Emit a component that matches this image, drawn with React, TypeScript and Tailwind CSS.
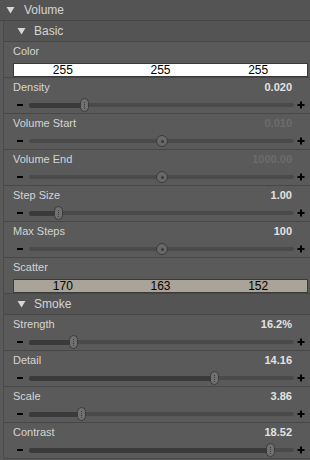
import React from 'react';

type SliderRow = {
  label: string;
  value: string;
  knob: number; // knob centre, px from window left
  shape: 'oval' | 'circle';
  disabled?: boolean;
};

const basicRows: SliderRow[] = [
  { label: 'Density', value: '0.020', knob: 84, shape: 'oval' },
  { label: 'Volume Start', value: '0.010', knob: 162, shape: 'circle', disabled: true },
  { label: 'Volume End', value: '1000.00', knob: 162, shape: 'circle', disabled: true },
  { label: 'Step Size', value: '1.00', knob: 58, shape: 'oval' },
  { label: 'Max Steps', value: '100', knob: 162, shape: 'circle' },
];

const smokeRows: SliderRow[] = [
  { label: 'Strength', value: '16.2%', knob: 73, shape: 'oval' },
  { label: 'Detail', value: '14.16', knob: 214, shape: 'oval' },
  { label: 'Scale', value: '3.86', knob: 81, shape: 'oval' },
  { label: 'Contrast', value: '18.52', knob: 270, shape: 'oval' },
];

const TRACK_LEFT = 29;

const Triangle = () => (
  <svg width="9" height="8" viewBox="0 0 9 8" className="shrink-0">
    <path d="M0.5 1 L8.5 1 L4.5 7.5 Z" fill="#d6d6d6" />
  </svg>
);

const Plus = () => (
  <svg width="8" height="8" viewBox="0 0 8 8" className="shrink-0 ml-[3px] mr-[5px]">
    <path d="M4 0.5 V7.5 M0.5 4 H7.5" stroke="#000" strokeWidth="2" />
  </svg>
);

const Header = ({ title, indent }: { title: string; indent: boolean }) => (
  <div
    className={`h-[21px] flex items-center border-b border-[#474747] bg-[#545454] text-[12px] text-[#d4d4d4] ${
      indent ? 'pl-[13px] gap-[8px]' : 'pl-[6px] gap-[9px]'
    }`}
  >
    <Triangle />
    <span>{title}</span>
  </div>
);

const Slider = ({ row }: { row: SliderRow }) => {
  const fill = row.shape === 'oval' ? row.knob - TRACK_LEFT : 0;
  return (
    <div className="relative h-[16px] mt-[2px] flex items-center">
      <div className="w-[6px] h-[2px] bg-black ml-[13px] mr-[6px]" />
      <div className="relative flex-1 h-[4px] rounded-full bg-[#4a4a4a]">
        {fill > 0 && (
          <div
            className="absolute left-0 top-[-0.5px] h-[5px] rounded-full bg-[#3a3a3a]"
            style={{ width: fill }}
          />
        )}
        {row.shape === 'oval' ? (
          <div
            className="absolute top-[-5px] w-[9px] h-[14px] rounded-full border border-[#3a3a3a] bg-[#707070] flex justify-center items-center"
            style={{ left: row.knob - TRACK_LEFT - 4.5 }}
          >
            <div className="w-[1px] h-[7px] border-l border-dotted border-[#3e3e3e]" />
          </div>
        ) : (
          <div
            className="absolute top-[-4px] w-[12px] h-[12px] rounded-full border-[1.5px] border-[#3a3a3a] bg-[#686868] flex justify-center items-center"
            style={{ left: row.knob - TRACK_LEFT - 6 }}
          >
            <div className="w-[3px] h-[3px] rounded-full bg-[#3a3a3a]" />
          </div>
        )}
      </div>
      <Plus />
    </div>
  );
};

const SliderProp = ({ row }: { row: SliderRow }) => (
  <div className="h-[36px] border-b border-[#474747] flex flex-col pt-[2px]">
    <div className="h-[15px] flex items-center justify-between pl-[9px] pr-[18px] text-[11px]">
      <span className="text-[#d4d4d4]">{row.label}</span>
      <span className={`font-bold text-[11px] ${row.disabled ? 'text-[#6c6c6c]' : 'text-[#e2e2e2]'}`}>
        {row.value}
      </span>
    </div>
    <Slider row={row} />
  </div>
);

const ColorProp = ({ label, rgb, bg }: { label: string; rgb: number[]; bg: string }) => (
  <div className="h-[36px] border-b border-[#474747] flex flex-col pt-[2px]">
    <div className="h-[15px] flex items-center pl-[9px] text-[11px] text-[#d4d4d4]">{label}</div>
    <div
      className={`ml-[9px] mr-[2px] mt-[4px] h-[15px] border border-[#3a3a3a] grid grid-cols-3 items-center text-[12px] leading-none text-black ${bg}`}
    >
      {rgb.map((v, i) => (
        <span key={i} className="text-center">
          {v}
        </span>
      ))}
    </div>
  </div>
);

export default function App() {
  return (
    <div
      className="w-[310px] h-[460px] overflow-hidden bg-[#5a5a5a] select-none"
      style={{ fontFamily: '"Liberation Sans", Arial, sans-serif' }}
    >
      <Header title="Volume" indent={false} />
      <div className="ml-[3px] border-l border-[#4a4a4a]">
        <Header title="Basic" indent />
        <ColorProp label="Color" rgb={[255, 255, 255]} bg="bg-white" />
        {basicRows.map((r) => (
          <SliderProp key={r.label} row={r} />
        ))}
        <ColorProp label="Scatter" rgb={[170, 163, 152]} bg="bg-[#aaa398]" />
        <Header title="Smoke" indent />
        {smokeRows.map((r) => (
          <SliderProp key={r.label} row={r} />
        ))}
      </div>
    </div>
  );
}
